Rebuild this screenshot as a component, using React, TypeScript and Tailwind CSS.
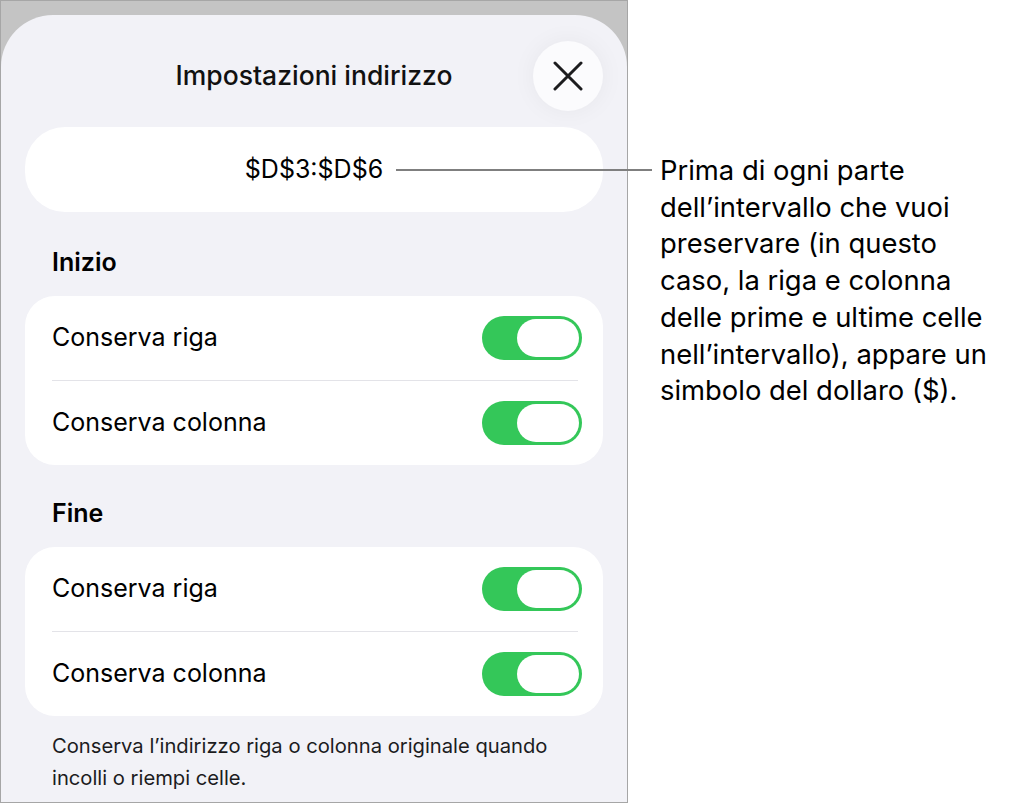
import React from "react";

const font = { fontFamily: "Inter, 'Noto Sans', sans-serif" };

function Toggle() {
  return (
    <div className="flex h-[44px] w-[100px] items-center justify-end rounded-full bg-[#34c759] p-[3px]">
      <div className="h-[38px] w-[62px] rounded-full bg-white" />
    </div>
  );
}

function Row({ label }: { label: string }) {
  return (
    <div className="flex h-[84px] items-center justify-between pl-[27px] pr-[21px]">
      <span className="text-[25px] text-black">{label}</span>
      <Toggle />
    </div>
  );
}

function Section({ title }: { title: string }) {
  return (
    <>
      <div className="pl-[27px] text-[25px] font-semibold leading-[30px] text-black">
        {title}
      </div>
      <div className="mt-[19px] rounded-[30px] bg-white">
        <Row label="Conserva riga" />
        <div className="ml-[27px] mr-[25px] h-px bg-[#e3e3e8]" />
        <Row label="Conserva colonna" />
      </div>
    </>
  );
}

export default function App() {
  return (
    <div className="relative flex h-[803px] w-[1019px] bg-white" style={font}>
      {/* sheet frame */}
      <div className="flex h-[803px] w-[628px] flex-col border border-[#a6a6a6] bg-[#c4c4c4] pt-[14px]">
        <div className="flex-1 rounded-t-[52px] bg-[#f2f2f7] px-[24px]">
          <div className="mt-[26px] grid h-[70px] grid-cols-[70px_1fr_70px] items-center">
            <div />
            <h1 className="text-center text-[26.5px] font-medium text-[#111]">
              Impostazioni indirizzo
            </h1>
            <button className="flex h-[70px] w-[70px] items-center justify-center rounded-full bg-[#fbfbfd] shadow-[0_0_24px_rgba(0,0,0,0.05)]">
              <svg width="30" height="30" viewBox="0 0 30 30">
                <path
                  d="M2 2 L28 28 M28 2 L2 28"
                  stroke="#1c1c1e"
                  strokeWidth="3"
                  strokeLinecap="round"
                />
              </svg>
            </button>
          </div>

          <div className="mt-[16px] flex h-[85px] items-center justify-center rounded-[40px] bg-white">
            <span className="text-[25px] text-black">$D$3:$D$6</span>
          </div>

          <div className="mt-[35px]">
            <Section title="Inizio" />
          </div>
          <div className="mt-[33px]">
            <Section title="Fine" />
          </div>

          <p className="mt-[14px] pl-[27px] pr-[30px] text-[20.2px] leading-[32px] text-[#1c1c1e]">
            Conserva l’indirizzo riga o colonna originale quando incolli o
            riempi celle.
          </p>
        </div>
      </div>

      {/* callout */}
      <div className="absolute left-[396px] top-[169px] h-[2px] w-[256px] bg-[#7f7f7f]" />
      <p className="ml-[32px] mt-[152px] w-[345px] text-[27.4px] leading-[36.7px] text-black">
        Prima di ogni parte dell’intervallo che vuoi preservare (in questo
        caso, la riga e colonna delle prime e ultime celle nell’intervallo),
        appare un simbolo del dollaro ($).
      </p>
    </div>
  );
}
